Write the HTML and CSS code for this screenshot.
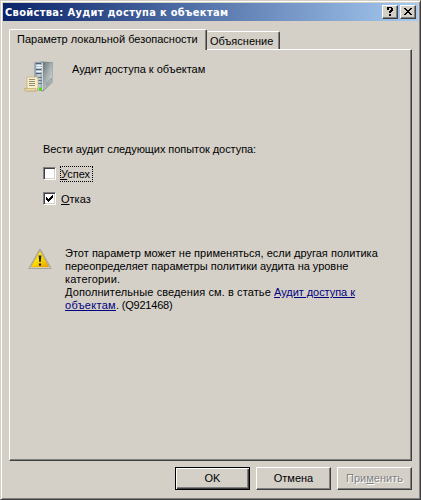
FILE: index.html
```html
<!DOCTYPE html>
<html lang="ru">
<head>
<meta charset="utf-8">
<title>Свойства: Аудит доступа к объектам</title>
<link rel="stylesheet" href="styles.css">
</head>
<body>
<div class="window">
  <header class="titlebar">
    <h1>Свойства: Аудит доступа к объектам</h1>
    <button class="caption" aria-label="Справка"><svg width="10" height="10" viewBox="0 0 10 10" shape-rendering="crispEdges"><path d="M2 0h5v1h1v3h-1v1h-1v1h-2v-2h1v-1h1v-2h-2v2h-2zM4 7h2v2h-2z"/></svg></button>
    <button class="caption close" aria-label="Закрыть"><svg width="8" height="8" viewBox="0 0 8 8" shape-rendering="crispEdges"><path d="M0 0h2v1h1v1h2v-1h1v-1h2v1h-1v1h-1v1h-1v1h1v1h1v1h1v1h-2v-1h-1v-1h-2v1h-1v1h-2v-1h1v-1h1v-1h1v-1h-1v-1h-1v-1h-1z"/></svg></button>
  </header>
  <nav class="tabs">
    <div class="tab active">Параметр локальной безопасности</div>
    <div class="tab">Объяснение</div>
  </nav>
  <main class="page">
    <section class="policy">
      <svg class="server" width="32" height="34" viewBox="0 0 32 34">
        <defs>
          <linearGradient id="side" x1="0" y1="0" x2="1" y2="1"><stop offset="0" stop-color="#697675"/><stop offset=".45" stop-color="#a5afaf"/><stop offset="1" stop-color="#e0e5e5"/></linearGradient>
          <linearGradient id="front"><stop offset="0" stop-color="#8e9cac"/><stop offset=".5" stop-color="#c4d1dc"/><stop offset="1" stop-color="#8798a5"/></linearGradient>
        </defs>
        <path d="M10.500 2.200l8-.7 10.500.7v19.800l-10 9.500-8.500-2z" fill="#7e8a8a"/>
        <path d="M11 2.500h8v28.500l-8-2z" fill="url(#front)"/>
        <path d="M19 2.500h9.700v19l-9.700 9z" fill="url(#side)"/>
        <path d="M12 3.500h5M12 9.500h5M12 13.500h5" stroke="#4d6078"/>
        <path d="M12 5.500h6M12 7.500h6M12 11.500h6" stroke="#edf5fb"/>
        <path d="M14 17.500h4M14 20.500h4M14 23.500h4" stroke="#647789"/>
        <path d="M18.500 3v27" stroke="#eef2f4" stroke-width=".7"/>
        <path d="M22.500 26v-3l5-5v3zM22.500 24l5-5M23.500 25l4-4" stroke="#8d9796" fill="none" stroke-width=".7"/>
        <path d="M15 27.500h3v3h-3z" fill="#50e000"/>
        <path d="M3 17h10l1 1v10h-1v3H4l-2-1v-2h1z" fill="#f7edc7" stroke="#c5ae74" stroke-width=".7"/>
        <path d="M.500 28.500h11v2.500h-10q-1-1-1-2.500z" fill="#e8d7a0" stroke="#b6a06b" stroke-width=".6"/>
        <path d="M5 19.500h6M5 21.500h6M5 23.500h6M5 25.500h6" stroke="#777567" stroke-width=".8"/>
      </svg>
      <span>Аудит доступа к объектам</span>
    </section>
    <p class="prompt">Вести аудит следующих попыток доступа:</p>
    <div class="check"><i class="box"></i><span class="label focus"><u>У</u>спех</span></div>
    <div class="check"><i class="box"><svg width="9" height="9" viewBox="0 0 9 9" shape-rendering="crispEdges"><path d="M1 3h1v1h1v1h1v-1h1v-1h1v-1h1v-1h1v3h-1v1h-1v1h-1v1h-1v1h-1v-1h-1v-1h-1z"/></svg></i><span class="label"><u>О</u>тказ</span></div>
    <section class="notice">
      <svg width="24" height="22" viewBox="0 0 24 22">
        <defs><linearGradient id="warn" x1="0" x2=".8" y1="0" y2="1"><stop offset="0" stop-color="#fff568"/><stop offset=".55" stop-color="#fce000"/><stop offset="1" stop-color="#eea800"/></linearGradient></defs>
        <path d="M12 1.200L23 20.500H1z" fill="#e4e4e4" stroke="#a2a2a2" stroke-width="1.200" stroke-linejoin="round"/>
        <path d="M12 3L21 19H3z" fill="url(#warn)" stroke="#d79b00" stroke-width=".6" stroke-linejoin="round"/>
        <path d="M10.600 7.500h2.800L12.700 14h-1.400zM10.900 15.500h2.200v2.200h-2.200z" fill="#24251c"/>
      </svg>
      <p>
        <span class="line first">Этот параметр может не применяться, если другая политика</span>
        <span class="line second">переопределяет параметры политики аудита на уровне</span>
        <span class="line third">категории.</span>
        <span class="line fourth">Дополнительные сведения см. в статье <a>Аудит доступа к</a></span>
        <span class="line fifth"><a>объектам</a>. (Q921468)</span>
      </p>
    </section>
  </main>
  <footer class="actions">
    <button class="btn default">OK</button>
    <button class="btn">Отмена</button>
    <button class="btn" disabled>При<u>м</u>енить</button>
  </footer>
</div>
</body>
</html>
```
FILE: styles.css
```css
* { box-sizing: border-box; }
body {
  margin: 0;
  font: 11px/13px "Liberation Sans", Arial, sans-serif;
  color: #000;
  background: #d4d0c8;
}
.window {
  width: 421px;
  height: 500px;
  padding: 2px 1px 0 2px;
  background: #d4d0c8;
  border: 1px solid;
  border-color: #d4d0c8 #404040 #404040 #d4d0c8;
  box-shadow: inset 1px 1px #fff, inset -1px -1px #808080;
}
.titlebar {
  display: flex;
  align-items: center;
  width: 415px;
  height: 18px;
  padding: 0 2px;
  background: linear-gradient(90deg, #0a246a, #a6caf0);
  color: #fff;
}
h1 {
  flex: 1;
  margin: 0;
  padding-top: 2px;
  font: bold 11px/18px "DejaVu Sans Condensed", "DejaVu Sans", sans-serif;
  letter-spacing: .32px;
  white-space: nowrap;
}
button { font: inherit; color: inherit; padding: 0; }
.caption {
  display: flex;
  align-items: center;
  justify-content: center;
  width: 16px;
  height: 14px;
  background: #d4d0c8;
  border: 1px solid;
  border-color: #fff #404040 #404040 #fff;
  box-shadow: inset -1px -1px #808080;
}
.close { margin-left: 2px; }
.tabs {
  display: flex;
  align-items: flex-end;
  height: 28px;
  padding-left: 6px;
}
.tab {
  width: 73px;
  height: 18px;
  padding: 3px 0 0 2px;
  background: #d4d0c8;
  border: 1px solid;
  border-color: #fff #404040 transparent transparent;
  border-bottom: 0;
  border-radius: 2px 2px 0 0;
  box-shadow: inset -1px 0 #808080;
  white-space: nowrap;
}
.tab.active {
  position: relative;
  z-index: 1;
  width: 198px;
  height: 21px;
  margin-bottom: -1px;
  padding: 3px 0 0 7px;
  border-left-color: #fff;
}
.page {
  width: 403px;
  height: 412px;
  margin-left: 6px;
  padding: 9px 0 0 14px;
  border: 1px solid;
  border-color: #fff #404040 #404040 #fff;
  box-shadow: inset -1px -1px #808080;
}
.policy { display: flex; height: 83px; }
.policy span { margin: 4px 0 0 16px; }
.server { flex: none; margin-top: 1px; }
.prompt {
  height: 24px;
  margin: 0 0 0 19px;
  line-height: 15px;
  letter-spacing: -.06px;
  white-space: nowrap;
}
.check { display: flex; align-items: flex-start; height: 16px; margin: 0 0 9px 19px; }
.box {
  width: 13px;
  height: 13px;
  margin-top: 1px;
  padding: 1px;
  background: #fff;
  border: 1px solid;
  border-color: #808080 #fff #fff #808080;
  box-shadow: inset 1px 1px #404040, inset -1px -1px #d4d0c8;
}
.box svg { display: block; }
.label {
  height: 16px;
  margin-left: 4px;
  border: 1px solid transparent;
  line-height: 14px;
}
.focus { width: 33px; border: 1px dotted #000; }
.notice { display: flex; margin: 41px 0 0 4px; }
.notice svg { flex: none; }
.notice p { margin: -1px 0 0 13px; }
.line { display: block; width: max-content; white-space: nowrap; }
.first { letter-spacing: .02px; }
.second { letter-spacing: -.03px; }
.third { letter-spacing: .2px; }
.fourth { letter-spacing: .1px; }
.fourth a { letter-spacing: -.05px; }
.fifth { letter-spacing: -.2px; }
.fifth a { letter-spacing: .3px; }
a { color: #000080; text-decoration: underline; }
.actions { display: flex; gap: 6px; margin: 6px 0 0 172px; }
.btn {
  width: 75px;
  height: 23px;
  background: #d4d0c8;
  border: 1px solid;
  border-color: #fff #404040 #404040 #fff;
  box-shadow: inset -1px -1px #808080;
}
.default {
  border-color: #000;
  box-shadow: inset 1px 1px #fff, inset -1px -1px #404040, inset -2px -2px #808080;
}
.btn:disabled { color: #808080; text-shadow: 1px 1px #fff; }
```
